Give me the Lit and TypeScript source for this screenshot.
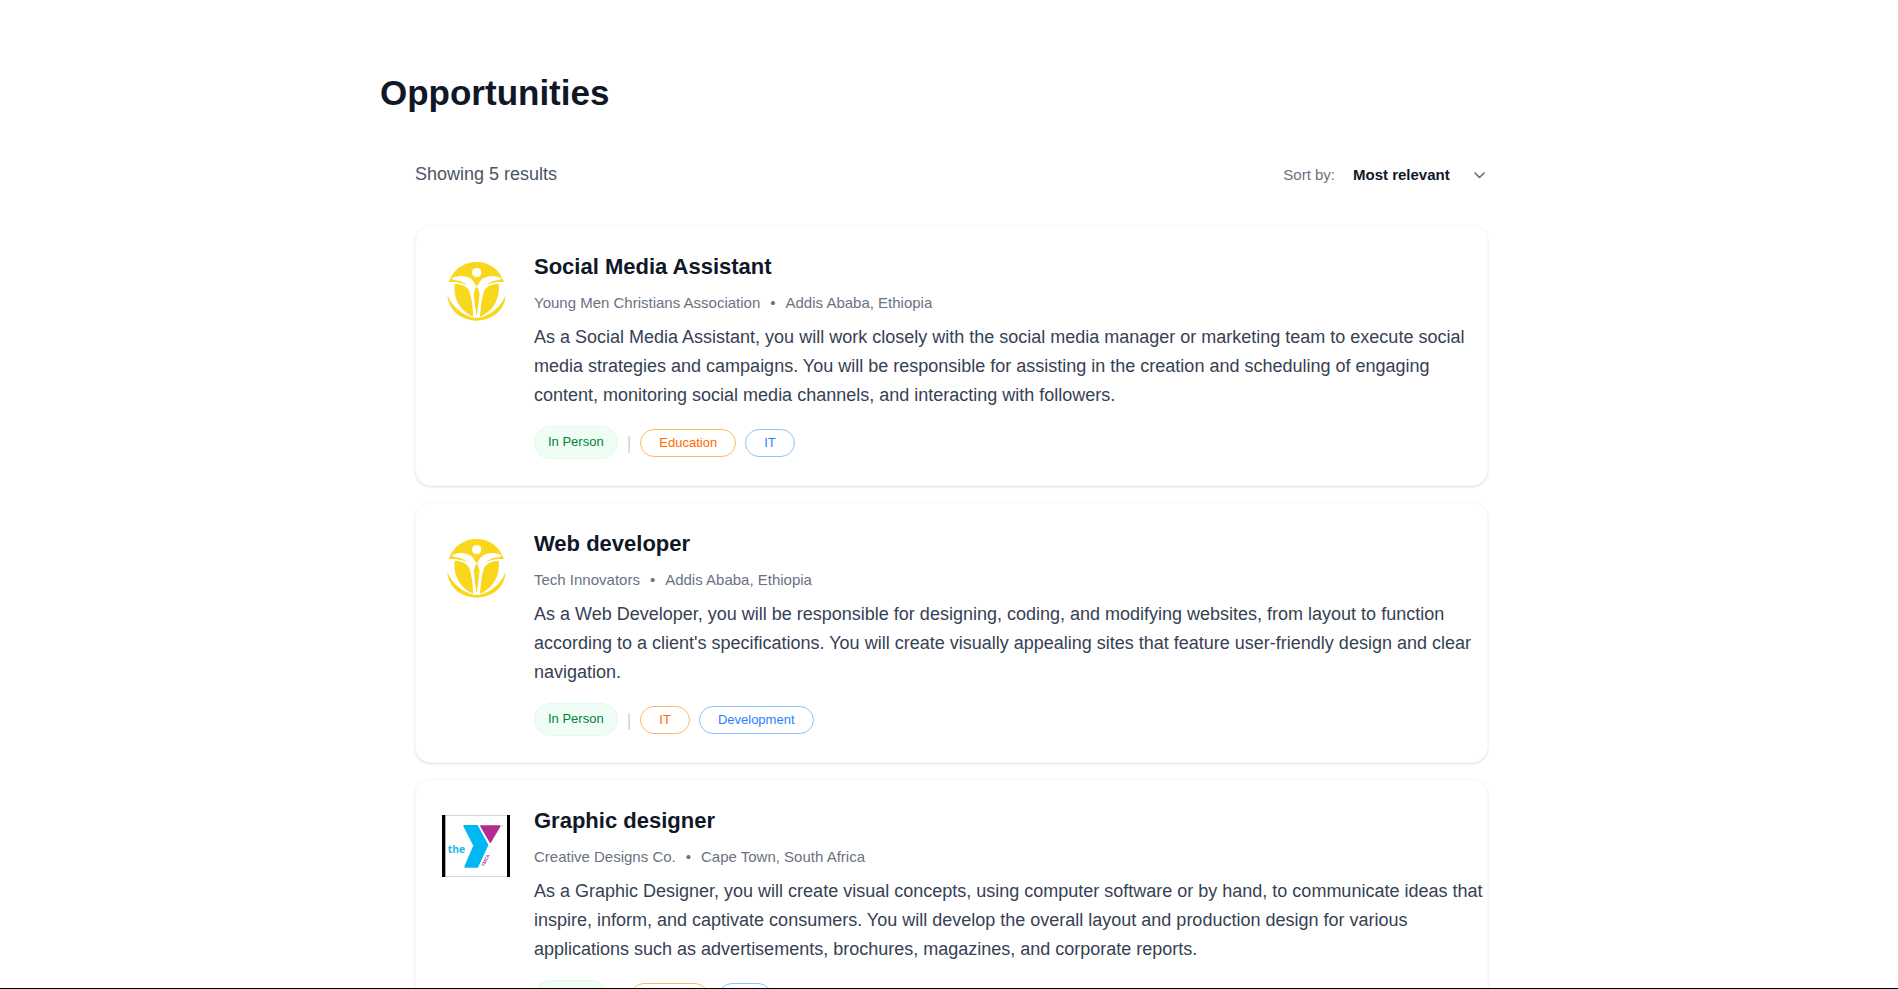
import { LitElement, html, css, svg } from "lit";
import { customElement, property } from "lit/decorators.js";

type LogoName = "figure" | "ymca";

interface Opportunity {
  title: string;
  organisation: string;
  location: string;
  description: string;
  mode: string;
  categories: string[];
  logo: LogoName;
}

const opportunities: Opportunity[] = [
  {
    title: "Social Media Assistant",
    organisation: "Young Men Christians Association",
    location: "Addis Ababa, Ethiopia",
    description:
      "As a Social Media Assistant, you will work closely with the social media manager or marketing team to execute social media strategies and campaigns. You will be responsible for assisting in the creation and scheduling of engaging content, monitoring social media channels, and interacting with followers.",
    mode: "In Person",
    categories: ["Education", "IT"],
    logo: "figure",
  },
  {
    title: "Web developer",
    organisation: "Tech Innovators",
    location: "Addis Ababa, Ethiopia",
    description:
      "As a Web Developer, you will be responsible for designing, coding, and modifying websites, from layout to function according to a client's specifications. You will create visually appealing sites that feature user-friendly design and clear navigation.",
    mode: "In Person",
    categories: ["IT", "Development"],
    logo: "figure",
  },
  {
    title: "Graphic designer",
    organisation: "Creative Designs Co.",
    location: "Cape Town, South Africa",
    description:
      "As a Graphic Designer, you will create visual concepts, using computer software or by hand, to communicate ideas that inspire, inform, and captivate consumers. You will develop the overall layout and production design for various applications such as advertisements, brochures, magazines, and corporate reports.",
    mode: "Remote",
    categories: ["Design", "Art"],
    logo: "ymca",
  },
];

// Round yellow emblem: a figure with raised arms cut out of a disc.
const figureLogo = svg`
  <g fill="#f9d71c">
    <path d="M26 72 C40 34 72 12 110 12 C148 12 178 34 192 72 L172 72 C154 74 140 78 130 88 C122 98 119 128 110 174 C101 128 98 98 90 88 C80 78 64 74 46 72 Z" />
    <path d="M44 77 C66 78 82 85 88 100 C96 122 99 148 101 176 C66 164 38 124 44 77 Z" />
    <path d="M176 77 C154 78 138 85 132 100 C124 122 121 148 119 176 C154 164 182 124 176 77 Z" />
    <path d="M22 112 C38 148 68 172 101 179 L119 179 C152 172 182 148 197 112 C194 158 156 188 110 188 C64 188 26 158 22 112 Z" />
  </g>
  <path fill="#fff" d="M34 62 C46 53 66 52 82 57 C97 62 103 72 110 90 C117 72 123 62 138 57 C154 52 174 53 186 62 L174 67 C156 69 142 75 134 88 C125 106 122 146 120 178 L111 178 L119 106 L110 80 L101 106 L109 178 L100 178 C98 146 95 106 86 88 C78 75 64 69 46 67 Z" />
  <circle cx="110" cy="44" r="14" fill="#fff" />
`;

const ymcaLogo = svg`
  <rect x="36" y="42" width="204" height="186" fill="#fff" />
  <path d="M46 43H232M46 227H232" stroke="#b5b5b5" stroke-width="2" />
  <rect x="36" y="42" width="10" height="186" fill="#000" />
  <rect x="231" y="42" width="9" height="186" fill="#000" />
  <path fill="#00b9f2" stroke="#00b9f2" stroke-width="6" stroke-linejoin="round" d="M103 75 H141 L172 132 L142 197 H106 L133 134 Z" />
  <path fill="#b32b92" stroke="#b32b92" stroke-width="5" stroke-linejoin="round" d="M153 75 H209 L181 123 Z" />
  <circle cx="217" cy="75" r="2" fill="#c77ab5" />
  <text x="53" y="156" font-family="Open Sans, sans-serif" font-weight="700" font-size="31" fill="#1cb8e8">the</text>
  <text x="162" y="197" transform="rotate(-63 162 197)" font-family="Open Sans, sans-serif" font-weight="700" font-size="13" fill="#b32b92">YMCA</text>
`;

@customElement("opportunity-card")
export class OpportunityCard extends LitElement {
  @property({ attribute: false }) item!: Opportunity;

  static styles = css`
    :host {
      display: block;
    }
    .card {
      display: flex;
      align-items: flex-start;
      gap: 24px;
      padding: 26px 4px 26px 26px;
      border: 1px solid #f9fafb;
      border-radius: 16px;
      background: #fff;
      box-shadow:
        0 1px 3px rgba(0, 0, 0, 0.06),
        0 1px 2px rgba(0, 0, 0, 0.08);
    }
    .logo {
      flex: none;
      width: 68px;
      height: 62px;
      margin-top: 9px;
    }
    .body {
      flex: 1;
      min-width: 0;
    }
    .title {
      margin: 0;
      font-size: 22px;
      line-height: 30px;
      font-weight: 700;
      color: #101828;
    }
    .meta {
      display: flex;
      flex-wrap: wrap;
      gap: 10px;
      margin: 10px 0 0;
      font-size: 15px;
      line-height: 22px;
      color: #6a7282;
    }
    .description {
      margin: 9px 0 0;
      font-size: 18px;
      line-height: 29px;
      color: #364153;
    }
    .tags {
      display: flex;
      flex-wrap: wrap;
      align-items: center;
      gap: 9px;
      margin-top: 16px;
      font-size: 13px;
      line-height: 18px;
    }
    .mode {
      padding: 6px 13px 7px;
      border: 1px solid #dcfce7;
      border-radius: 17px;
      background: #f0fdf4;
      color: #008236;
    }
    .divider {
      font-size: 18px;
      color: #d1d5dc;
    }
    .tag {
      padding: 4px 18px;
      border: 1px solid #8ec5ff;
      border-radius: 14px;
      color: #2b7fff;
    }
    .tag.primary {
      border-color: #ffb86a;
      color: #ff6900;
    }
  `;

  render() {
    const { item } = this;
    const isFigure = item.logo === "figure";
    return html`
      <article class="card">
        <svg
          class="logo"
          viewBox=${isFigure ? "6 9 204 186" : "36 42 204 186"}
          role="img"
          aria-label=${`${item.organisation} logo`}
        >
          ${isFigure ? figureLogo : ymcaLogo}
        </svg>
        <div class="body">
          <h2 class="title">${item.title}</h2>
          <p class="meta">
            <span>${item.organisation}</span><span>•</span
            ><span>${item.location}</span>
          </p>
          <p class="description">${item.description}</p>
          <div class="tags">
            <span class="mode">${item.mode}</span>
            <span class="divider">|</span>
            ${item.categories.map(
              (name, index) =>
                html`<span class="tag ${index === 0 ? "primary" : ""}"
                  >${name}</span
                >`,
            )}
          </div>
        </div>
      </article>
    `;
  }
}

@customElement("app-root")
export class AppRoot extends LitElement {
  static styles = css`
    :host {
      display: block;
      box-sizing: border-box;
      height: 100vh;
      overflow: auto;
      scrollbar-width: none;
      padding-left: 5px;
      border-bottom: 1px solid #000;
      background: #fff;
      font-family: "Liberation Sans", Arial, sans-serif;
    }
    .page {
      box-sizing: border-box;
      max-width: 1143px;
      margin: 0 auto;
      padding: 70px 0;
    }
    .heading {
      margin: 0;
      font-size: 35px;
      line-height: 46px;
      font-weight: 700;
      color: #101828;
    }
    .results {
      padding: 0 35px;
    }
    .toolbar {
      display: flex;
      align-items: center;
      justify-content: space-between;
      margin: 44px 0 36px;
    }
    .count {
      margin: 0;
      font-size: 18px;
      line-height: 29px;
      color: #4a5565;
    }
    .sort {
      display: flex;
      align-items: center;
      gap: 18px;
      font-size: 15px;
      line-height: 22px;
      color: #6a7282;
    }
    .picker {
      display: grid;
      align-items: center;
    }
    .picker > * {
      grid-area: 1 / 1;
    }
    .select {
      appearance: none;
      margin: 0;
      padding: 0 38px 0 0;
      border: 0;
      background: none;
      font: inherit;
      font-weight: 700;
      color: #101828;
    }
    .chevron {
      justify-self: end;
      width: 18px;
      height: 18px;
      pointer-events: none;
    }
    .list {
      display: grid;
      gap: 16px;
    }
  `;

  render() {
    return html`
      <main class="page">
        <h1 class="heading">Opportunities</h1>
        <section class="results">
          <div class="toolbar">
            <p class="count">Showing 5 results</p>
            <div class="sort">
              <label for="sort">Sort by:</label>
              <div class="picker">
                <select id="sort" class="select">
                  <option>Most relevant</option>
                </select>
                <svg class="chevron" viewBox="0 0 18 18" aria-hidden="true">
                  <path
                    d="M5 7 L9.5 11.5 L14 7"
                    fill="none"
                    stroke="#6a7282"
                    stroke-width="1.7"
                    stroke-linecap="round"
                    stroke-linejoin="round"
                  />
                </svg>
              </div>
            </div>
          </div>
          <div class="list">
            ${opportunities.map(
              (item) =>
                html`<opportunity-card .item=${item}></opportunity-card>`,
            )}
          </div>
        </section>
      </main>
    `;
  }
}
